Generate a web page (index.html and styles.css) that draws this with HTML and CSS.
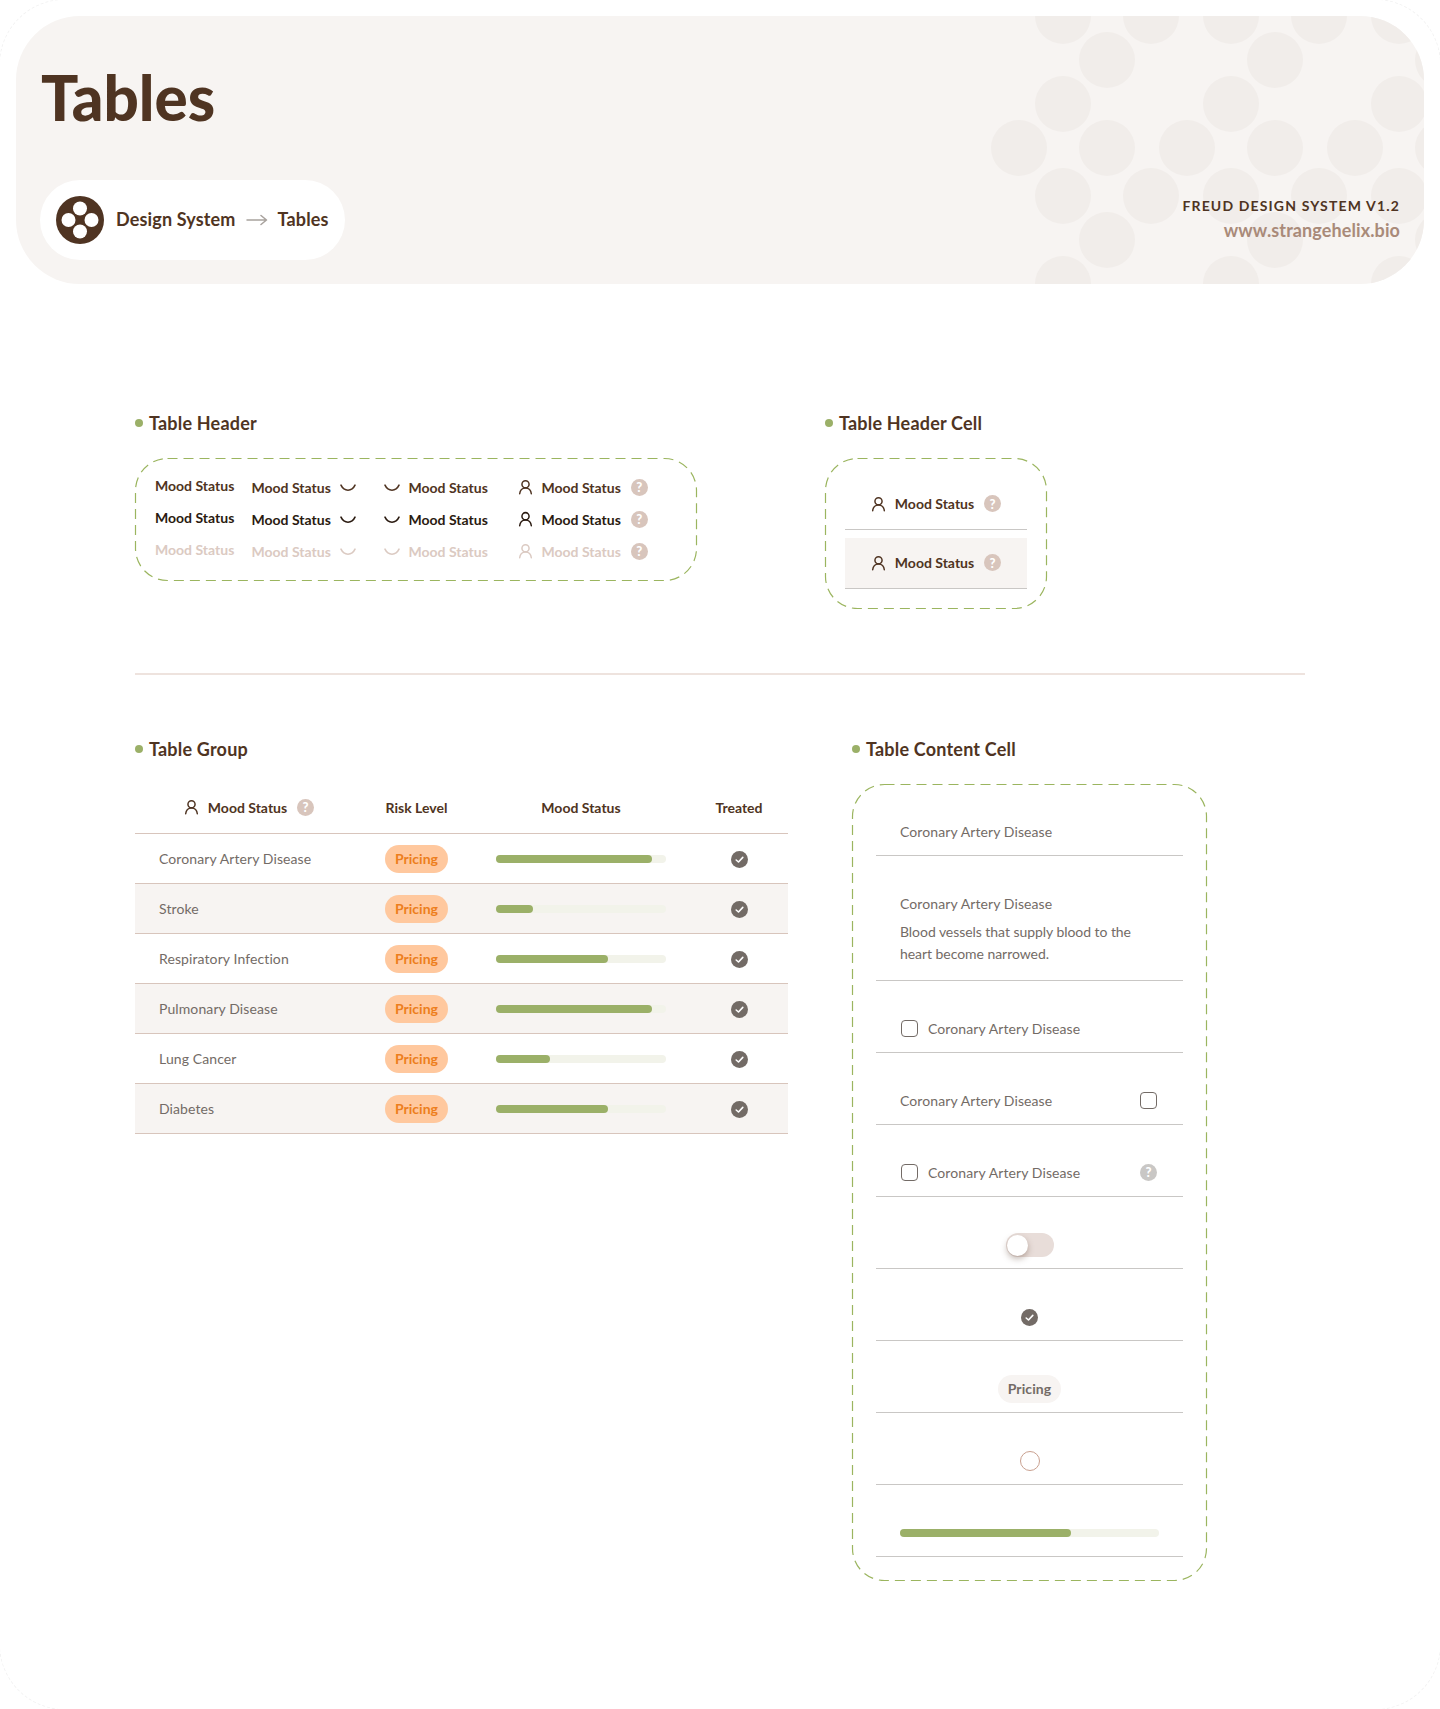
FILE: index.html
```html
<!DOCTYPE html>
<html lang="en">

<head>
    <meta charset="UTF-8">
    <meta name="viewport" content="width=device-width, initial-scale=1.0">
    <title>Tables</title>
    <link rel="stylesheet" href="styles.css">
</head>

<body>
    <svg class="defs" aria-hidden="true">
        <symbol id="person" viewBox="0 0 16 16">
            <circle cx="8" cy="5" r="3.8" fill="none" stroke="currentColor" stroke-width="1.6"/>
            <path d="M1.8 15.2c.3-3.6 2.8-6.2 6.2-6.2s5.900 2.600 6.200 6.200" fill="none" stroke="currentColor" stroke-width="1.600" stroke-linecap="round"/>
        </symbol>
        <symbol id="arc" viewBox="0 0 16 8">
            <path d="M1 1.200c1.600 3.400 3.900 5 7 5s5.400-1.600 7-5" fill="none" stroke="currentColor" stroke-width="1.600" stroke-linecap="round"/>
        </symbol>
        <symbol id="check" viewBox="0 0 17 17">
            <circle cx="8.500" cy="8.500" r="8.500" fill="#736b66"/>
            <path d="M5.200 9l2.300 2 4.300-4.600" fill="none" stroke="#fff" stroke-width="1.600" stroke-linecap="round" stroke-linejoin="round"/>
        </symbol>
    </svg>

    <div class="frame"></div>

    <header class="hero">
        <svg class="hero-dots" width="1408" height="268" viewBox="16 16 1408 268" aria-hidden="true">
            <g fill="#f1edea">
                <circle cx="1063" cy="16" r="28"/><circle cx="1151" cy="16" r="28"/><circle cx="1231" cy="16" r="28"/><circle cx="1319" cy="16" r="28"/><circle cx="1399" cy="16" r="28"/>
                <circle cx="1107" cy="60" r="28"/><circle cx="1275" cy="60" r="28"/><circle cx="1443" cy="60" r="28"/>
                <circle cx="1063" cy="104" r="28"/><circle cx="1231" cy="104" r="28"/><circle cx="1399" cy="104" r="28"/>
                <circle cx="1019" cy="148" r="28"/><circle cx="1107" cy="148" r="28"/><circle cx="1187" cy="148" r="28"/><circle cx="1275" cy="148" r="28"/><circle cx="1355" cy="148" r="28"/><circle cx="1443" cy="148" r="28"/>
                <circle cx="1063" cy="196" r="28"/><circle cx="1151" cy="196" r="28"/><circle cx="1231" cy="196" r="28"/><circle cx="1319" cy="196" r="28"/><circle cx="1399" cy="196" r="28"/>
                <circle cx="1107" cy="240" r="28"/><circle cx="1275" cy="240" r="28"/><circle cx="1443" cy="240" r="28"/>
                <circle cx="1063" cy="284" r="28"/><circle cx="1231" cy="284" r="28"/><circle cx="1399" cy="284" r="28"/>
            </g>
        </svg>
        <div class="hero-left">
            <h1>Tables</h1>
            <div class="crumbs">
                <svg class="logo" width="48" height="48" viewBox="0 0 48 48">
                    <circle cx="24" cy="24" r="24" fill="#4f3422"/>
                    <g fill="#fff">
                        <circle cx="24" cy="12.500" r="7"/><circle cx="24" cy="35.500" r="7"/><circle cx="12.500" cy="24" r="7"/><circle cx="35.500" cy="24" r="7"/>
                    </g>
                </svg>
                <span>Design System</span>
                <svg class="crumb-arrow" width="22" height="12" viewBox="0 0 22 12">
                    <path d="M1 6h19M15 1.500L20.500 6 15 10.500" fill="none" stroke="#a8a29d" stroke-width="1.500" stroke-linecap="round" stroke-linejoin="round"/>
                </svg>
                <span>Tables</span>
            </div>
        </div>
        <div class="hero-right">
            <div class="version">FREUD DESIGN SYSTEM V1.2</div>
            <div class="site">www.strangehelix.bio</div>
        </div>
    </header>

    <main class="content">
        <div class="top-row">
            <section class="sec-header">
                <h2 class="sec-title">Table Header</h2>
                <div class="dash-box header-box">
                    <svg class="dash"><rect x="0.500" y="0.500" rx="32"/></svg>
                    <div class="hd-grid">
                        <div class="hd hd-first">Mood Status</div>
                        <div class="hd">Mood Status <svg class="ico-arc"><use href="#arc"/></svg></div>
                        <div class="hd"><svg class="ico-arc"><use href="#arc"/></svg> Mood Status</div>
                        <div class="hd"><svg class="ico-person"><use href="#person"/></svg> Mood Status <span class="help">?</span></div>

                        <div class="hd hd-first hover">Mood Status</div>
                        <div class="hd hover">Mood Status <svg class="ico-arc"><use href="#arc"/></svg></div>
                        <div class="hd hover"><svg class="ico-arc"><use href="#arc"/></svg> Mood Status</div>
                        <div class="hd hover"><svg class="ico-person"><use href="#person"/></svg> Mood Status <span class="help">?</span></div>

                        <div class="hd hd-first off">Mood Status</div>
                        <div class="hd off">Mood Status <svg class="ico-arc"><use href="#arc"/></svg></div>
                        <div class="hd off"><svg class="ico-arc"><use href="#arc"/></svg> Mood Status</div>
                        <div class="hd off"><svg class="ico-person"><use href="#person"/></svg> Mood Status <span class="help">?</span></div>
                    </div>
                </div>
            </section>

            <section class="sec-cell">
                <h2 class="sec-title">Table Header Cell</h2>
                <div class="dash-box cell-box">
                    <svg class="dash"><rect x="0.500" y="0.500" rx="32"/></svg>
                    <div class="head-cell"><svg class="ico-person"><use href="#person"/></svg> Mood Status <span class="help">?</span></div>
                    <div class="head-cell shaded"><svg class="ico-person"><use href="#person"/></svg> Mood Status <span class="help">?</span></div>
                </div>
            </section>
        </div>

        <hr class="divider">

        <div class="bottom-row">
            <section class="sec-group">
                <h2 class="sec-title">Table Group</h2>
                <table class="group">
                    <thead>
                        <tr>
                            <th class="col-name"><div class="th-inner"><svg class="ico-person"><use href="#person"/></svg> Mood Status <span class="help">?</span></div></th>
                            <th class="col-risk">Risk Level</th>
                            <th class="col-bar">Mood Status</th>
                            <th class="col-done">Treated</th>
                        </tr>
                    </thead>
                    <tbody>
                        <tr>
                            <td class="name">Coronary Artery Disease</td>
                            <td class="center risk"><span class="pill">Pricing</span></td>
                            <td><div class="bar"><div class="fill" style="width: 92%"></div></div></td>
                            <td class="center"><svg class="ico-check"><use href="#check"/></svg></td>
                        </tr>
                        <tr>
                            <td class="name">Stroke</td>
                            <td class="center risk"><span class="pill">Pricing</span></td>
                            <td><div class="bar"><div class="fill" style="width: 22%"></div></div></td>
                            <td class="center"><svg class="ico-check"><use href="#check"/></svg></td>
                        </tr>
                        <tr>
                            <td class="name">Respiratory Infection</td>
                            <td class="center risk"><span class="pill">Pricing</span></td>
                            <td><div class="bar"><div class="fill" style="width: 66%"></div></div></td>
                            <td class="center"><svg class="ico-check"><use href="#check"/></svg></td>
                        </tr>
                        <tr>
                            <td class="name">Pulmonary Disease</td>
                            <td class="center risk"><span class="pill">Pricing</span></td>
                            <td><div class="bar"><div class="fill" style="width: 92%"></div></div></td>
                            <td class="center"><svg class="ico-check"><use href="#check"/></svg></td>
                        </tr>
                        <tr>
                            <td class="name">Lung Cancer</td>
                            <td class="center risk"><span class="pill">Pricing</span></td>
                            <td><div class="bar"><div class="fill" style="width: 32%"></div></div></td>
                            <td class="center"><svg class="ico-check"><use href="#check"/></svg></td>
                        </tr>
                        <tr>
                            <td class="name">Diabetes</td>
                            <td class="center risk"><span class="pill">Pricing</span></td>
                            <td><div class="bar"><div class="fill" style="width: 66%"></div></div></td>
                            <td class="center"><svg class="ico-check"><use href="#check"/></svg></td>
                        </tr>
                    </tbody>
                </table>
            </section>

            <section class="sec-content">
                <h2 class="sec-title">Table Content Cell</h2>
                <div class="dash-box content-box">
                    <svg class="dash"><rect x="0.500" y="0.500" rx="32"/></svg>
                    <div class="c-cell">Coronary Artery Disease</div>
                    <div class="c-cell c-tall">
                        <div class="c-title">Coronary Artery Disease</div>
                        <p class="c-desc">Blood vessels that supply blood to the heart become narrowed.</p>
                    </div>
                    <div class="c-cell"><span class="box"></span>Coronary Artery Disease</div>
                    <div class="c-cell c-split">Coronary Artery Disease<span class="box"></span></div>
                    <div class="c-cell c-split"><span class="c-pair"><span class="box"></span>Coronary Artery Disease</span><span class="help gray">?</span></div>
                    <div class="c-cell c-mid"><span class="toggle"><span class="knob"></span></span></div>
                    <div class="c-cell c-mid"><svg class="ico-check"><use href="#check"/></svg></div>
                    <div class="c-cell c-mid"><span class="tag">Pricing</span></div>
                    <div class="c-cell c-mid"><span class="radio"></span></div>
                    <div class="c-cell c-low"><div class="bar wide"><div class="fill" style="width: 66%"></div></div></div>
                </div>
            </section>
        </div>
    </main>
</body>

</html>
```

FILE: styles.css
```css
* {
    box-sizing: border-box;
}

html,
body {
    margin: 0;
    padding: 0;
}

body {
    position: relative;
    height: 1709px;
    overflow: hidden;
    background: #fff;
    font-family: "Lato", "Liberation Sans", sans-serif;
    color: #4f3422;
}

.defs {
    position: absolute;
    width: 0;
    height: 0;
}

/* faint dashed page outline, only the corners show */
.frame {
    position: absolute;
    top: -1px;
    left: -1px;
    right: -1px;
    bottom: -1px;
    border: 1px dashed #f3f3f3;
    border-radius: 66px;
    pointer-events: none;
}

/* header */
.hero {
    position: relative;
    display: flex;
    justify-content: space-between;
    align-items: flex-end;
    height: 268px;
    margin: 16px 16px 0;
    padding: 0 24px 24px;
    background: #f7f4f2;
    border-radius: 64px;
    overflow: hidden;
}

.hero-dots {
    position: absolute;
    top: 0;
    left: 0;
}

.hero-left,
.hero-right {
    position: relative;
}

h1 {
    margin: 0 0 47px 1px;
    font-size: 62px;
    line-height: 72px;
    font-weight: 900;
    letter-spacing: 0;
}

.crumbs {
    display: inline-flex;
    align-items: center;
    height: 80px;
    padding: 0 16px;
    background: #fff;
    border-radius: 40px;
    font-size: 18px;
    font-weight: 700;
    letter-spacing: 0.15px;
}

.crumbs span {
    padding-bottom: 3px;
}

.logo {
    margin-right: 12px;
}

.crumb-arrow {
    margin: 0 10px;
}

.hero-right {
    text-align: right;
    padding-bottom: 18px;
}

.version {
    font-size: 14px;
    line-height: 18px;
    font-weight: 700;
    letter-spacing: 1.15px;
}

.site {
    margin-top: 3px;
    font-size: 18px;
    line-height: 24px;
    font-weight: 700;
    letter-spacing: 0.1px;
    color: #a98a79;
}

/* sections */
.content {
    padding: 127px 135px 0;
}

.top-row {
    display: flex;
    align-items: flex-start;
}

.sec-header {
    width: 690px;
}

.sec-title {
    display: flex;
    align-items: center;
    gap: 6px;
    margin: 0 0 23px;
    font-size: 18px;
    line-height: 24px;
    font-weight: 700;
    letter-spacing: 0.2px;
}

.sec-title::before {
    content: "";
    width: 8px;
    height: 8px;
    border-radius: 50%;
    background: #9bb068;
}

.dash-box {
    position: relative;
}

.dash {
    position: absolute;
    top: 0;
    left: 0;
    width: 100%;
    height: 100%;
    overflow: visible;
    pointer-events: none;
}

.dash rect {
    width: calc(100% - 1px);
    height: calc(100% - 1px);
    fill: none;
    stroke: #9bb55f;
    stroke-width: 1.2;
    stroke-dasharray: 10 6;
}

/* table header sheet */
.header-box {
    width: 562px;
    height: 123px;
    padding: 13px 20px;
}

.hd-grid {
    display: grid;
    grid-template-columns: 96.500px 132px 134px auto;
    grid-auto-rows: 32px;
}

.hd {
    display: flex;
    align-items: center;
    gap: 9px;
    font-size: 14px;
    font-weight: 700;
    white-space: nowrap;
}

.hd-first {
    padding-bottom: 3px;
}

.hover {
    color: #2a1a10;
}

.off {
    color: #dbcac2;
}

.ico-arc {
    width: 16px;
    height: 8px;
    margin-top: 2px;
    flex: none;
}

.ico-person {
    width: 15px;
    height: 16px;
    flex: none;
}

.ico-check {
    display: inline-block;
    width: 17px;
    height: 17px;
    vertical-align: middle;
}

.help {
    display: inline-flex;
    align-items: center;
    justify-content: center;
    flex: none;
    width: 17px;
    height: 17px;
    margin-left: 1px;
    border-radius: 50%;
    background: #d8c5bc;
    color: #fff;
    font-size: 13px;
    font-weight: 900;
}

.help.gray {
    background: #c9c7c5;
}

/* header cell sheet */
.cell-box {
    display: flex;
    flex-direction: column;
    gap: 8px;
    width: 222px;
    height: 151px;
    padding: 21px 20px 20px;
}

.head-cell {
    display: flex;
    align-items: center;
    justify-content: center;
    gap: 9px;
    height: 51px;
    border-bottom: 1px solid #c9c7c5;
    font-size: 14px;
    font-weight: 700;
}

.head-cell.shaded {
    height: 52px;
    background: #f7f4f2;
}

.divider {
    height: 1.500px;
    margin: 64px 0 0;
    border: 0;
    background: #eee3de;
}

.bottom-row {
    display: flex;
    align-items: flex-start;
    padding-top: 62px;
}

.sec-group {
    width: 717px;
}

/* table group */
.group {
    width: 653px;
    margin-top: 3px;
    table-layout: fixed;
    border-collapse: separate;
    border-spacing: 0;
    font-size: 14px;
}

.group th,
.group td {
    height: 50px;
    padding: 1px 0 0;
    border-bottom: 1px solid #d8c5bc;
}

.group th {
    padding: 0 0 2px;
    font-weight: 700;
    text-align: center;
}

.col-name {
    width: 223px;
}

.col-risk {
    width: 114px;
}

.col-bar {
    width: 218px;
}

.group .col-risk,
.group .risk {
    padding-left: 3px;
}

.th-inner {
    display: flex;
    align-items: center;
    justify-content: center;
    gap: 9px;
    padding-left: 5px;
}

.group tbody tr:nth-child(even) td {
    background: #f7f4f2;
}

.group .name {
    padding: 0 0 0 24px;
    letter-spacing: 0.1px;
    color: #736b66;
}

.center {
    text-align: center;
}

.pill,
.tag {
    display: inline-block;
    height: 28px;
    padding: 0 10.500px;
    border-radius: 14px;
    line-height: 28px;
    font-size: 14px;
    font-weight: 700;
    vertical-align: top;
}

.pill {
    background: #ffc89e;
    color: #ed7e1c;
}

.tag {
    padding: 0 10px;
    background: #f7f4f2;
    color: #736b66;
}

.bar {
    width: 170px;
    height: 8px;
    margin: 0 auto;
    border-radius: 4px;
    background: #f2f3ea;
}

.bar.wide {
    width: 100%;
}

.fill {
    height: 100%;
    border-radius: 4px;
    background: #9bb068;
}

/* content cell sheet */
.content-box {
    display: flex;
    flex-direction: column;
    gap: 24px;
    width: 355px;
    height: 797px;
    padding: 24px;
}

.c-cell {
    display: flex;
    align-items: center;
    flex: none;
    height: 48px;
    padding: 0 24px;
    border-bottom: 1px solid #c9c7c5;
    font-size: 14px;
    letter-spacing: 0.1px;
    color: #736b66;
}

.c-tall {
    display: block;
    height: 101px;
    padding: 14px 24px 0;
}

.c-title {
    line-height: 20px;
}

.c-desc {
    margin: 7px 0 0;
    line-height: 22px;
    letter-spacing: -0.05px;
}

.c-split {
    justify-content: space-between;
}

.c-pair {
    display: flex;
    align-items: center;
}

.c-mid {
    justify-content: center;
    padding-top: 2px;
}

.c-low {
    padding-top: 2px;
}

.box {
    flex: none;
    width: 17px;
    height: 17px;
    margin: 0 10px 0 1px;
    border: 1.500px solid #736b66;
    border-radius: 4px;
}

.c-split > .box {
    margin: 0 2px 0 0;
}

.c-split > .help {
    margin: 0 2px 0 0;
}

.toggle {
    position: relative;
    width: 48px;
    height: 24px;
    border-radius: 12px;
    background: #e8ddd9;
}

.knob {
    position: absolute;
    top: 2px;
    left: 1px;
    width: 21px;
    height: 21px;
    border-radius: 50%;
    background: #fff;
    box-shadow: 0 3px 6px rgba(79, 52, 34, 0.35);
}

.radio {
    width: 20px;
    height: 20px;
    border: 1px solid #c9a08f;
    border-radius: 50%;
}
```
